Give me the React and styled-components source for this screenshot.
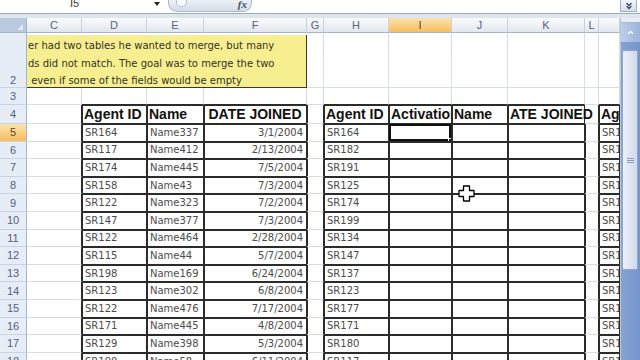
import styled, { createGlobalStyle, css } from "styled-components";
import { ChevronsDown, ChevronUp } from "lucide-react";

const GlobalStyle = createGlobalStyle`
  html, body {
    margin: 0;
    padding: 0;
    background: #fff;
  }
  body {
    font-family: "Liberation Sans", Arial, sans-serif;
  }
`;

// row header + columns C .. M
const COLUMNS = "27px 55px 65px 57px 103px 17px 65px 63px 56px 77px 14px 21px";
const LINE = "#2b2b2b";

const leftTable = [
  ["SR164", "Name337", "3/1/2004"],
  ["SR117", "Name412", "2/13/2004"],
  ["SR174", "Name445", "7/5/2004"],
  ["SR158", "Name43", "7/3/2004"],
  ["SR122", "Name323", "7/2/2004"],
  ["SR147", "Name377", "7/3/2004"],
  ["SR122", "Name464", "2/28/2004"],
  ["SR115", "Name44", "5/7/2004"],
  ["SR198", "Name169", "6/24/2004"],
  ["SR123", "Name302", "6/8/2004"],
  ["SR122", "Name476", "7/17/2004"],
  ["SR171", "Name445", "4/8/2004"],
  ["SR129", "Name398", "5/3/2004"],
  ["SR190", "Name58", "6/11/2004"],
];

const rightIds = [
  "SR164", "SR182", "SR191", "SR125", "SR174", "SR199", "SR134",
  "SR147", "SR137", "SR123", "SR177", "SR171", "SR180", "SR117",
];

const farIds = [
  "SR117", "SR164", "SR122", "SR158", "SR174", "SR147", "SR122",
  "SR115", "SR198", "SR123", "SR122", "SR171", "SR129", "SR190",
];

const Page = styled.div`
  position: relative;
  width: 640px;
  height: 360px;
  overflow: hidden;
  display: flex;
  flex-direction: column;
  background: #fff;
`;

const FormulaBar = styled.div`
  display: flex;
  height: 13px;
  flex-shrink: 0;
  overflow: hidden;
  background: #fff;
`;

const NameBox = styled.div`
  width: 163px;
  box-sizing: border-box;
  display: flex;
  align-items: flex-start;
  padding-left: 70px;
  font-size: 11px;
  line-height: 10px;
  color: #3a3a3a;
`;

const NameText = styled.span`
  margin-top: -2px;
`;

const DropArrow = styled.span`
  margin-left: auto;
  margin-right: 3px;
  margin-top: 2px;
  width: 0;
  height: 0;
  border-left: 3.5px solid transparent;
  border-right: 3.5px solid transparent;
  border-top: 4px solid #222;
`;

const FxPill = styled.div`
  width: 84px;
  height: 12px;
  margin-left: 5px;
  box-sizing: border-box;
  display: flex;
  align-items: flex-start;
  justify-content: space-between;
  padding: 0 4px 0 7px;
  border: 1px solid #aab8c9;
  border-top: none;
  border-radius: 0 0 9px 9px;
  background: linear-gradient(#eef2f7, #d3dce7);
`;

const PillDot = styled.span`
  width: 9px;
  height: 6px;
  border: 1px solid #b5c2d2;
  border-top: none;
  border-radius: 0 0 5px 5px;
  background: #f7f9fc;
`;

const Fx = styled.span`
  font-family: "Liberation Serif", serif;
  font-style: italic;
  font-weight: bold;
  font-size: 11px;
  line-height: 9px;
  color: #4a5566;
`;

const FormulaInput = styled.div`
  flex: 1;
  background: #fff;
`;

const ExpandBtn = styled.div`
  width: 17px;
  height: 12px;
  margin-right: 3px;
  box-sizing: border-box;
  display: flex;
  align-items: center;
  justify-content: center;
  border: 1px solid #9fb0c6;
  border-top: none;
  background: linear-gradient(#f3f6fa, #d5deea);
  color: #2d3a4d;
`;

const Band = styled.div`
  height: 5px;
  flex-shrink: 0;
  box-sizing: border-box;
  border-top: 1px solid #9aaabf;
  background: #dde5ef;
`;

const Body = styled.div`
  display: flex;
  flex: 1;
  min-height: 0;
`;

const Sheet = styled.div`
  width: 620px;
  display: flex;
  flex-direction: column;
  overflow: hidden;
`;

const Row = styled.div`
  display: grid;
  grid-template-columns: ${COLUMNS};
  height: ${(p) => p.$h}px;
  flex-shrink: 0;
`;

const orange = "linear-gradient(#fce3b0, #f6bd5e)";

const Corner = styled.div`
  box-sizing: border-box;
  display: flex;
  align-items: flex-end;
  justify-content: flex-end;
  padding: 0 3px 2px 0;
  background: #b9cadf;
  border-right: 1px solid #9eb6ce;
  border-bottom: 1px solid #9eb6ce;
`;

const CornerMark = styled.span`
  width: 0;
  height: 0;
  border-left: 6px solid transparent;
  border-bottom: 6px solid #e3eaf3;
`;

const ColHead = styled.div`
  box-sizing: border-box;
  display: flex;
  align-items: center;
  justify-content: center;
  background: ${(p) => (p.$active ? orange : "linear-gradient(#fafbfd, #e2e7ee)")};
  border-right: 1px solid #c9d1dc;
  border-bottom: 1px solid #9eb6ce;
  font-size: 11px;
  color: ${(p) => (p.$active ? "#5b4a2a" : "#56657b")};
`;

const RowHead = styled.div`
  box-sizing: border-box;
  display: flex;
  justify-content: center;
  align-items: ${(p) => (p.$bottom ? "flex-end" : "center")};
  padding-bottom: ${(p) => (p.$bottom ? "1px" : "0")};
  background: ${(p) => (p.$active ? orange : "#e6edf6")};
  border-right: 1px solid #9eb6ce;
  border-bottom: 1px solid #c8d3e2;
  font-size: 11px;
  color: ${(p) => (p.$active ? "#5b4a2a" : "#52627b")};
`;

const Cell = styled.div`
  box-sizing: border-box;
  display: flex;
  align-items: center;
  justify-content: ${(p) =>
    p.$align === "right" ? "flex-end" : p.$align === "center" ? "center" : "flex-start"};
  padding: 0 3px;
  border-right: 1px solid ${(p) => (p.$edgeR ? LINE : "#d6dce6")};
  border-bottom: 1px solid ${(p) => (p.$edgeB ? LINE : "#d6dce6")};
  box-shadow: ${(p) => (p.$edgeL ? `inset 1px 0 0 ${LINE}` : "none")};
  white-space: nowrap;
  overflow: ${(p) => (p.$spill ? "visible" : "hidden")};
  font-family: "DejaVu Sans", sans-serif;
  font-size: 10px;
  color: #4b4b4b;
  ${(p) =>
    p.$head &&
    css`
      padding: 0 2px;
      font-family: "Liberation Sans", Arial, sans-serif;
      font-weight: bold;
      font-size: 14px;
      color: #111;
    `}
  ${(p) =>
    p.$box &&
    css`
      border-color: ${LINE};
      box-shadow: inset 1px 1px 0 ${LINE};
    `}
  ${(p) =>
    p.$sel &&
    css`
      position: relative;
      box-shadow: inset 0 0 0 2px #111;
      &::after {
        content: "";
        position: absolute;
        right: -3px;
        bottom: -3px;
        width: 4px;
        height: 4px;
        background: #111;
        border: 1px solid #fff;
        z-index: 2;
      }
    `}
`;

const Note = styled.div`
  grid-column: 2 / 6;
  margin-top: 2px;
  padding: 2px 0 0 1px;
  overflow: hidden;
  white-space: pre;
  background: #f7ef8f;
  border-right: 1px solid #3a3a30;
  border-bottom: 1px solid #3a3a30;
  font-family: "DejaVu Sans", sans-serif;
  font-size: 10px;
  line-height: 17.5px;
  color: #33332a;
`;

const ScrollBar = styled.div`
  width: 20px;
  box-sizing: border-box;
  display: flex;
  flex-direction: column;
  background: linear-gradient(90deg, #86a3d3, #7494cb);
  border-left: 1px solid #b8c8de;
`;

const SplitBox = styled.div`
  height: 5px;
  box-sizing: border-box;
  background: #e7edf5;
  border-bottom: 1px solid #a6b8d0;
`;

const ScrollBtn = styled.div`
  height: 19px;
  display: flex;
  align-items: center;
  justify-content: center;
  background: linear-gradient(90deg, #bccde7, #9cb5dc);
  color: #fff;
`;

const TrackGap = styled.div`
  height: ${(p) => p.$h}px;
`;

const Thumb = styled.div`
  height: 220px;
  margin: 0 2px 0 1px;
  box-sizing: border-box;
  display: flex;
  flex-direction: column;
  align-items: center;
  justify-content: center;
  gap: 1px;
  background: linear-gradient(90deg, #edf1f8, #cfdaea);
  border: 1px solid #8ea7cc;
  border-radius: 2px;
`;

const Grip = styled.span`
  width: 7px;
  height: 1px;
  background: #8a9dbb;
`;

const Cursor = styled.svg`
  position: absolute;
  left: 458px;
  top: 185px;
`;

const colLabels = ["C", "D", "E", "F", "G", "H", "I", "J", "K", "L", ""];

function DataRow({ n, item, id2, id3 }) {
  const active = n === 5;
  return (
    <Row $h={17.6}>
      <RowHead $active={active}>{n}</RowHead>
      <Cell $edgeR />
      <Cell $box>{item[0]}</Cell>
      <Cell $box>{item[1]}</Cell>
      <Cell $box $align="right">{item[2]}</Cell>
      <Cell $edgeL $edgeR />
      <Cell $box>{id2}</Cell>
      <Cell $box $sel={active} />
      <Cell $box />
      <Cell $box />
      <Cell $edgeL $edgeR />
      <Cell $box>{id3}</Cell>
    </Row>
  );
}

// which columns of row 3 sit right above a table
const aboveTable = [false, true, true, true, false, true, true, true, true, false, true];

const App = () => {
  return (
    <Page>
      <GlobalStyle />
      <FormulaBar>
        <NameBox>
          <NameText>I5</NameText>
          <DropArrow />
        </NameBox>
        <FxPill>
          <PillDot />
          <Fx>fx</Fx>
        </FxPill>
        <FormulaInput />
        <ExpandBtn>
          <ChevronsDown size={10} strokeWidth={3} />
        </ExpandBtn>
      </FormulaBar>
      <Band />
      <Body>
        <Sheet>
          <Row $h={15}>
            <Corner>
              <CornerMark />
            </Corner>
            {colLabels.map((c, i) => (
              <ColHead key={i} $active={c === "I"}>
                {c}
              </ColHead>
            ))}
          </Row>

          <Row $h={55}>
            <RowHead $bottom>2</RowHead>
            <Note>
              {"er had two tables he wanted to merge, but many\nds did not match. The goal was to merge the two\n even if some of the fields would be empty"}
            </Note>
            <Cell />
            <Cell />
            <Cell />
            <Cell />
            <Cell />
            <Cell />
            <Cell />
          </Row>

          <Row $h={17}>
            <RowHead>3</RowHead>
            {aboveTable.map((edge, i) => (
              <Cell key={i} $edgeB={edge} />
            ))}
          </Row>

          <Row $h={19}>
            <RowHead>4</RowHead>
            <Cell $edgeR />
            <Cell $box $head>Agent ID</Cell>
            <Cell $box $head>Name</Cell>
            <Cell $box $head $align="center">DATE JOINED</Cell>
            <Cell $edgeL $edgeR />
            <Cell $box $head>Agent ID</Cell>
            <Cell $box $head>Activation</Cell>
            <Cell $box $head>Name</Cell>
            <Cell $box $head $spill>ATE JOINED</Cell>
            <Cell $edgeR />
            <Cell $box $head>Agent ID</Cell>
          </Row>

          {leftTable.map((item, i) => (
            <DataRow key={i} n={i + 5} item={item} id2={rightIds[i]} id3={farIds[i]} />
          ))}
        </Sheet>

        <ScrollBar>
          <SplitBox />
          <ScrollBtn>
            <ChevronUp size={9} strokeWidth={3.5} />
          </ScrollBtn>
          <TrackGap $h={8} />
          <Thumb>
            <Grip />
            <Grip />
            <Grip />
          </Thumb>
        </ScrollBar>
      </Body>

      <Cursor width="17" height="17" viewBox="0 0 17 17">
        <path
          d="M5.5 1h6v4.5H16v6h-4.5V16h-6v-4.5H1v-6h4.5z"
          fill="#fff"
          stroke="#000"
          strokeWidth="1.3"
          strokeLinejoin="round"
        />
      </Cursor>
    </Page>
  );
};

export default App;
